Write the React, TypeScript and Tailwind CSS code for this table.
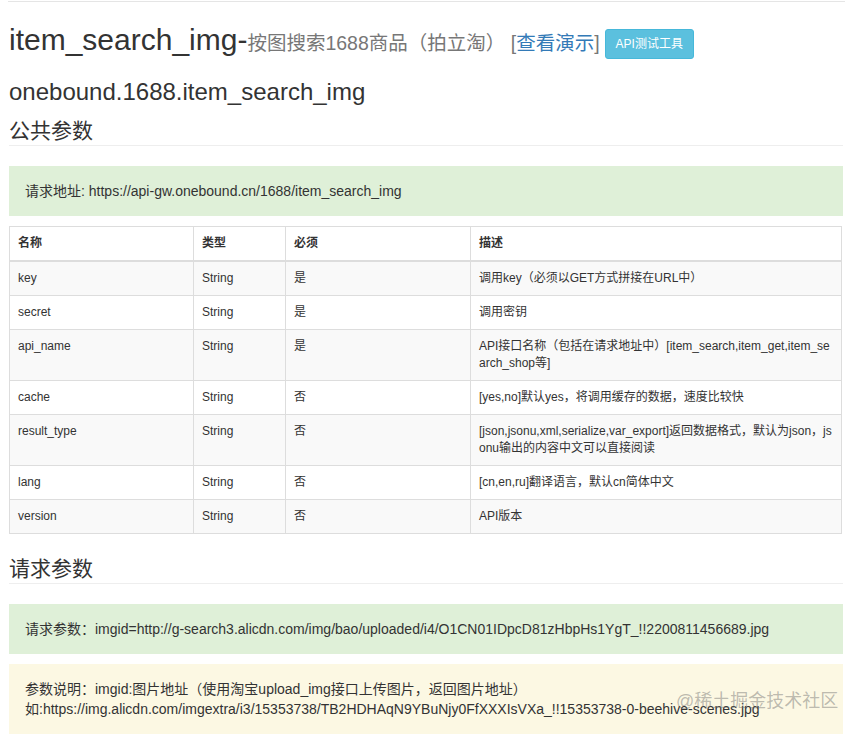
const params = [
  { name: "key", type: "String", req: "是", desc: "调用key（必须以GET方式拼接在URL中）" },
  { name: "secret", type: "String", req: "是", desc: "调用密钥" },
  { name: "api_name", type: "String", req: "是", desc: "API接口名称（包括在请求地址中）[item_search,item_get,item_search_shop等]" },
  { name: "cache", type: "String", req: "否", desc: "[yes,no]默认yes，将调用缓存的数据，速度比较快" },
  { name: "result_type", type: "String", req: "否", desc: "[json,jsonu,xml,serialize,var_export]返回数据格式，默认为json，jsonu输出的内容中文可以直接阅读" },
  { name: "lang", type: "String", req: "否", desc: "[cn,en,ru]翻译语言，默认cn简体中文" },
  { name: "version", type: "String", req: "否", desc: "API版本" },
]

export default function App() {
  return (
    <div className="relative min-h-[734px] bg-white font-['Liberation_Sans','Noto_Sans_CJK_SC',sans-serif] text-[#333]">
      <div className="ml-[8px] w-[837px] h-px bg-[#e5e5e5] mt-[1px]" />

      <div className="ml-[9px] w-[834px]">
        {/* Title */}
        <div className="flex items-start mt-[21px]">
          <h2 className="text-[30px] leading-[33px] font-normal">
            item_search_img-
            <small className="text-[19.5px] text-[#777]">
              按图搜索1688商品（拍立淘） [<a className="text-[#337ab7]">查看演示</a>]
            </small>
          </h2>
          <button className="ml-[5px] mt-[6px] px-[10px] py-[5px] text-[12px] leading-[18px] text-white bg-[#5bc0de] border border-[#46b8da] rounded-[3px]">
            API测试工具
          </button>
        </div>

        <h3 className="mt-[19px] text-[24px] leading-[26px]">onebound.1688.item_search_img</h3>

        <h4 className="mt-[13px] text-[21px] leading-[26px] pb-[1px] border-b border-[#eee]">公共参数</h4>

        <div className="mt-[20px] bg-[#dff0d8] border border-[#dff0d8] px-[15px] py-[14px] text-[14px] leading-[20px]">
          请求地址: https://api-gw.onebound.cn/1688/item_search_img
        </div>

        {/* Params table */}
        <table className="mt-[10px] w-[833px] table-fixed border-collapse text-[12px] leading-[17px]">
          <colgroup>
            <col className="w-[184px]" />
            <col className="w-[92px]" />
            <col className="w-[185px]" />
            <col />
          </colgroup>
          <thead>
            <tr>
              {["名称", "类型", "必须", "描述"].map((h) => (
                <th key={h} className="text-left font-bold px-[8px] py-[8px] border border-[#ddd] border-b-2">
                  {h}
                </th>
              ))}
            </tr>
          </thead>
          <tbody>
            {params.map((p, i) => (
              <tr key={p.name} className={i % 2 === 0 ? "bg-[#f9f9f9]" : "bg-white"}>
                <td className="align-top px-[8px] py-[8px] border border-[#ddd]">{p.name}</td>
                <td className="align-top px-[8px] py-[8px] border border-[#ddd]">{p.type}</td>
                <td className="align-top px-[8px] py-[8px] border border-[#ddd]">{p.req}</td>
                <td className="align-top px-[8px] py-[8px] border border-[#ddd] break-all">{p.desc}</td>
              </tr>
            ))}
          </tbody>
        </table>

        <h4 className="mt-[22px] text-[21px] leading-[26px] pb-[1px] border-b border-[#eee]">请求参数</h4>

        <div className="mt-[20px] bg-[#dff0d8] border border-[#dff0d8] px-[15px] py-[14px] text-[14px] leading-[20px]">
          请求参数：imgid=http://g-search3.alicdn.com/img/bao/uploaded/i4/O1CN01IDpcD81zHbpHs1YgT_!!2200811456689.jpg
        </div>

        <div className="mt-[10px] bg-[#fcf8e3] border border-[#fcf8e3] px-[15px] py-[14px] text-[14px] leading-[20px]">
          参数说明：imgid:图片地址（使用淘宝upload_img接口上传图片，返回图片地址）
          <br />
          如:https://img.alicdn.com/imgextra/i3/15353738/TB2HDHAqN9YBuNjy0FfXXXIsVXa_!!15353738-0-beehive-scenes.jpg
        </div>
      </div>

      {/* watermark */}
      <span className="absolute left-[676px] top-[688px] text-[18px] leading-[24px] text-[rgba(110,110,110,0.45)]">
        @稀土掘金技术社区
      </span>
    </div>
  )
}
